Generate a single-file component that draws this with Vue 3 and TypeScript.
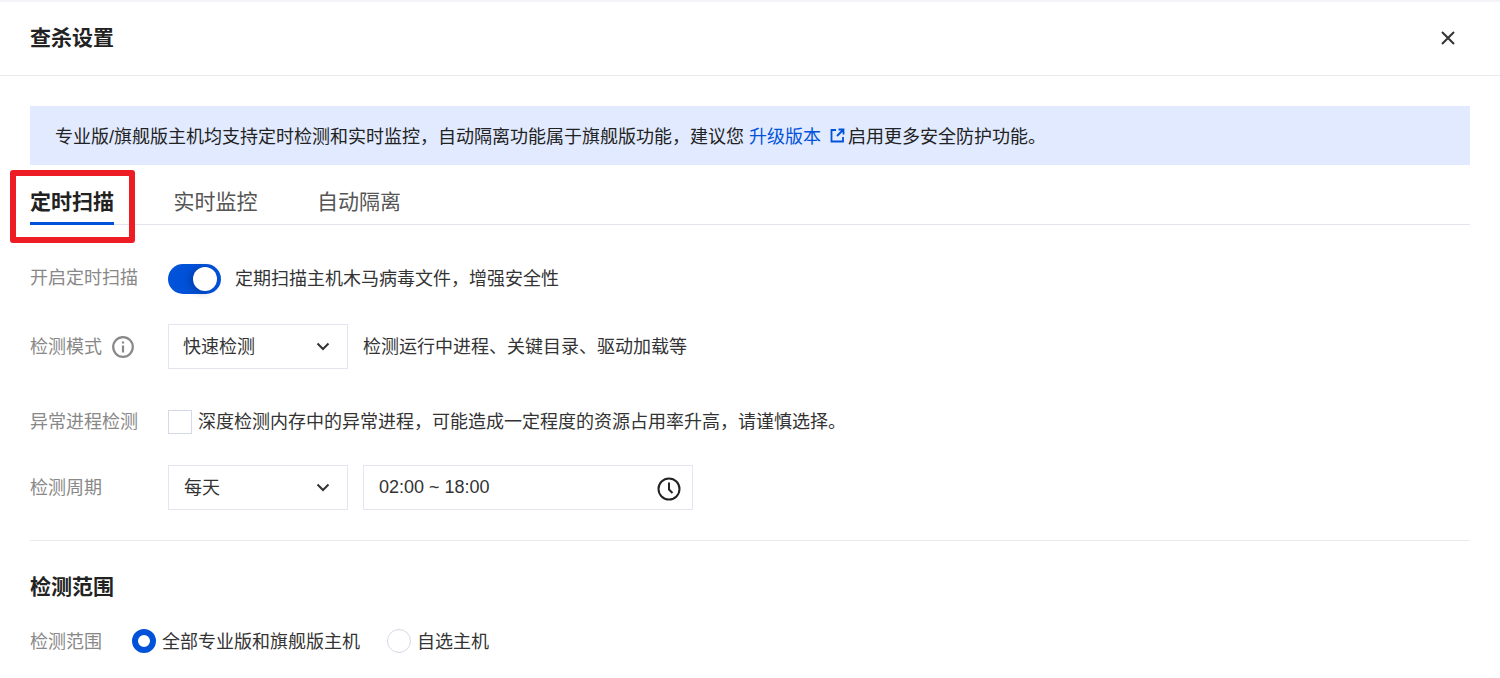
<script setup lang="ts">
const tabs: string[] = ['定时扫描', '实时监控', '自动隔离']
</script>

<template>
  <div class="page">
    <header class="head">
      <h1 class="title">查杀设置</h1>
      <svg class="close" width="24" height="24" viewBox="0 0 24 24" fill="none" stroke="#333" stroke-width="2"><path d="M6 6l12 12M18 6L6 18" /></svg>
    </header>
    <main class="body">
      <div class="alert">
        <span>专业版/旗舰版主机均支持定时检测和实时监控，自动隔离功能属于旗舰版功能，建议您</span>
        <a class="link">升级版本</a>
        <svg class="ext" width="15" height="15" viewBox="0 0 15 15" fill="none" stroke="#0052d9" stroke-width="1.8"><path d="M6 2H1.500v11.500H13V9M8.500 1.500H13.500V6.500M13.500 1.500L7 8" /></svg>
        <span>启用更多安全防护功能。</span>
      </div>
      <nav class="tabs">
        <div v-for="(t, i) in tabs" :key="t" class="tab" :class="{ active: i === 0 }">{{ t }}</div>
        <div class="mark"></div>
      </nav>
      <div class="row r1">
        <label class="lab lab-up">开启定时扫描</label>
        <span class="switch"><i></i></span>
        <span class="txt sw-txt">定期扫描主机木马病毒文件，增强安全性</span>
      </div>
      <div class="row r2">
        <label class="lab">检测模式
          <svg class="info" width="24" height="24" viewBox="0 0 24 24" fill="none" stroke="#888" stroke-width="2.200"><circle cx="12" cy="12" r="9.800" /><path d="M12 10.500V17.500M12 6.500V8.500" /></svg>
        </label>
        <div class="sel"><span class="txt">快速检测</span><svg width="24" height="24" viewBox="0 0 24 24" fill="none" stroke="#333" stroke-width="2"><path d="M6.500 8.500l5.500 5.500 5.500-5.500" /></svg></div>
        <span class="txt note">检测运行中进程、关键目录、驱动加载等</span>
      </div>
      <div class="row r3">
        <label class="lab">异常进程检测</label>
        <span class="check"></span>
        <span class="txt chk-txt">深度检测内存中的异常进程，可能造成一定程度的资源占用率升高，请谨慎选择。</span>
      </div>
      <div class="row r4">
        <label class="lab">检测周期</label>
        <div class="sel"><span class="txt">每天</span><svg width="24" height="24" viewBox="0 0 24 24" fill="none" stroke="#333" stroke-width="2"><path d="M6.500 8.500l5.500 5.500 5.500-5.500" /></svg></div>
        <div class="time"><span>02:00 ~ 18:00</span><svg class="clock" width="24" height="24" viewBox="0 0 24 24" fill="none" stroke="#222" stroke-width="2"><circle cx="12" cy="12" r="10.500" /><path d="M12 5.500V12.500L15.500 16" /></svg></div>
      </div>
      <hr class="divider" />
      <h2 class="section">检测范围</h2>
      <div class="row r5">
        <label class="lab short">检测范围</label>
        <span class="radio on"></span>
        <span class="txt r-txt">全部专业版和旗舰版主机</span>
        <span class="radio"></span>
        <span class="txt r-txt">自选主机</span>
      </div>
    </main>
    <div class="highlight"></div>
  </div>
</template>

<style>
html, body { margin: 0; background: #fff; overflow: hidden; }
</style>

<style scoped>
.page {
  position: relative;
  width: 1500px;
  height: 678px;
  overflow: hidden;
  background: #fff;
  border-top: 2px solid #f3f4f7;
  box-sizing: border-box;
  font-family: "Liberation Sans", "Noto Sans CJK SC", sans-serif;
  font-size: 18px;
  color: #333;
}
.head {
  border-bottom: 1px solid #e9eaee;
  display: flex;
  align-items: center;
  justify-content: space-between;
  padding: 0 40px 2px 30px;
  height: 71px;
}
.title { margin: 0 0 4px; font-size: 21px; font-weight: 700; color: #222; }
.body { padding: 30px 30px 0; }
.alert {
  height: 59px;
  box-sizing: border-box;
  background: #e1eaff;
  display: flex;
  align-items: center;
  padding: 0 0 2px 25px;
  color: #222;
  white-space: pre;
}
.link { color: #0052d9; margin-left: 5px; }
.ext { margin: 2px 3px 0 9px; }
.tabs {
  position: relative;
  display: flex;
  gap: 59.5px;
  height: 60px;
  align-items: center;
  border-bottom: 1px solid #e3e6f0;
  box-sizing: border-box;
  padding-top: 11px;
  font-size: 21px;
  color: #555;
}
.tab.active { font-weight: 700; color: #222; }
.mark { position: absolute; left: 0; bottom: -1px; width: 84px; height: 3px; background: #0052d9; }
.row { display: flex; align-items: center; }
.lab { width: 138px; color: #888; display: flex; align-items: center; gap: 9px; flex: none; padding-bottom: 4px; box-sizing: border-box; }
.lab svg { margin-top: 4px; }
.lab.lab-up { padding-bottom: 6px; }
.lab.short { width: 102px; padding-bottom: 2px; }
.txt { padding-bottom: 4px; }
.r5 .txt { padding-bottom: 2px; }
.r1 { margin-top: 39px; height: 30px; }
.r2 { margin-top: 30px; height: 45px; }
.r3 { margin-top: 41px; height: 24px; }
.r4 { margin-top: 31px; height: 45px; }
.switch {
  width: 53px;
  height: 30px;
  border-radius: 15px;
  background: #0052d9;
  position: relative;
  flex: none;
}
.switch i {
  position: absolute;
  right: 4px;
  top: 3px;
  width: 24px;
  height: 24px;
  border-radius: 50%;
  background: #fff;
  box-shadow: -3px 1px 7px rgba(0, 30, 100, .4);
}
.sw-txt { margin-left: 14px; }
.sel {
  width: 180px;
  height: 45px;
  border: 1px solid #e3e6f0;
  box-sizing: border-box;
  display: flex;
  align-items: center;
  justify-content: space-between;
  padding: 0 12px 0 15px;
  flex: none;
}
.r2 .sel .txt { margin-left: -1px; }
.note { margin-left: 15px; }
.check { width: 24px; height: 24px; border: 1px solid #d5d9e6; box-sizing: border-box; flex: none; }
.chk-txt { margin-left: 6px; }
.time {
  margin-left: 15px;
  width: 330px;
  height: 45px;
  border: 1px solid #e3e6f0;
  box-sizing: border-box;
  display: flex;
  align-items: center;
  justify-content: space-between;
  padding: 0 11px 0 15px;
}
.clock { margin-top: 2px; }
.divider { border: 0; border-top: 1px solid #e9eaee; margin: 30px 0 0; }
.section { margin: 32px 0 0; font-size: 21px; font-weight: 700; color: #222; line-height: 28px; }
.r5 { margin-top: 28px; height: 24px; }
.radio { width: 24px; height: 24px; border-radius: 50%; border: 1px solid #d5d9e6; box-sizing: border-box; flex: none; background: #fff; }
.radio.on { border: 6px solid #0052d9; }
.r-txt { margin: 0 27px 0 6px; }
.highlight {
  position: absolute;
  left: 10px;
  top: 168px;
  width: 125px;
  height: 73px;
  border: 6px solid #ee1c25;
  border-radius: 3px;
  box-sizing: border-box;
}
</style>
